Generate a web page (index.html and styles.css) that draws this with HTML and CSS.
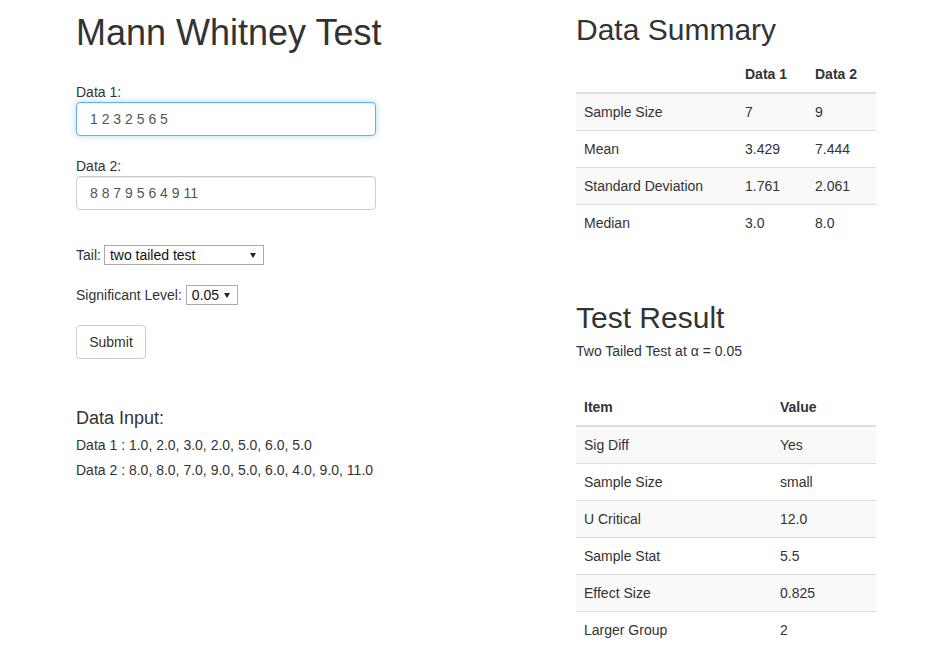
FILE: index.html
```html
<!DOCTYPE html>
<html lang="en">
<head>
<meta charset="utf-8">
<title>Mann Whitney Test</title>
<link rel="stylesheet" href="styles.css">
</head>
<body>
<div class="page">
  <div class="col-left">
    <h1 class="title">Mann Whitney Test</h1>
    <form class="form">
      <div class="form-group first">
        <label class="control-label" for="d1">Data 1:</label>
        <input id="d1" class="form-control focused" type="text" value="1 2 3 2 5 6 5">
      </div>
      <div class="form-group">
        <label class="control-label" for="d2">Data 2:</label>
        <input id="d2" class="form-control" type="text" value="8 8 7 9 5 6 4 9 11">
      </div>
      <div class="inline-row tail-row">
        <span>Tail:</span>
        <span class="sel sel-tail"><select><option>two tailed test</option></select></span>
      </div>
      <div class="inline-row sig-row">
        <span>Significant Level:</span>
        <span class="sel sel-sig"><select><option>0.05</option></select></span>
      </div>
      <button type="button" class="btn">Submit</button>
    </form>
    <h4 class="sub">Data Input:</h4>
    <p class="data-line">Data 1 : 1.0, 2.0, 3.0, 2.0, 5.0, 6.0, 5.0</p>
    <p class="data-line">Data 2 : 8.0, 8.0, 7.0, 9.0, 5.0, 6.0, 4.0, 9.0, 11.0</p>
  </div>
  <div class="col-right">
    <h2 class="h2">Data Summary</h2>
    <table class="table summary">
      <thead>
        <tr><th class="c1"></th><th class="c2">Data 1</th><th class="c3">Data 2</th></tr>
      </thead>
      <tbody>
        <tr><td>Sample Size</td><td>7</td><td>9</td></tr>
        <tr><td>Mean</td><td>3.429</td><td>7.444</td></tr>
        <tr><td>Standard Deviation</td><td>1.761</td><td>2.061</td></tr>
        <tr><td>Median</td><td>3.0</td><td>8.0</td></tr>
      </tbody>
    </table>
    <h2 class="h2 result-title">Test Result</h2>
    <p class="result-sub">Two Tailed Test at α = 0.05</p>
    <table class="table result">
      <thead>
        <tr><th class="r1">Item</th><th class="r2">Value</th></tr>
      </thead>
      <tbody>
        <tr><td>Sig Diff</td><td>Yes</td></tr>
        <tr><td>Sample Size</td><td>small</td></tr>
        <tr><td>U Critical</td><td>12.0</td></tr>
        <tr><td>Sample Stat</td><td>5.5</td></tr>
        <tr><td>Effect Size</td><td>0.825</td></tr>
        <tr><td>Larger Group</td><td>2</td></tr>
      </tbody>
    </table>
  </div>
</div>
</body>
</html>
```

FILE: styles.css
```css
* { box-sizing: border-box; }
html, body { margin: 0; padding: 0; background: #fff; }
body {
  font-family: "Liberation Sans", Arial, Helvetica, sans-serif;
  font-size: 14px;
  line-height: 20px;
  color: #333;
}
.page {
  display: flex;
  padding: 13px 0 0 76px;
}
.col-left { width: 500px; }
.col-right { width: 300px; }

.title {
  margin: 0;
  font-size: 36px;
  line-height: 40px;
  font-weight: normal;
  color: #333;
}
.form { margin: 29px 0 0; }
.form-group { width: 300px; margin-bottom: 20px; }
.control-label {
  display: block;
  font-weight: normal;
  line-height: 20px;
  height: 20px;
}
.form-control {
  display: block;
  width: 300px;
  height: 34px;
  padding: 6px 12px 6px 13px;
  font-family: inherit;
  font-size: 14px;
  line-height: 20px;
  color: #555;
  background: #fff;
  border: 1px solid #ccc;
  border-radius: 4px;
  box-shadow: inset 0 1px 1px rgba(0,0,0,.075);
  outline: none;
}
.form-control.focused {
  border-color: #66afe9;
  box-shadow: inset 0 1px 1px rgba(0,0,0,.075), 0 0 6px rgba(102,175,233,.5);
}
.inline-row {
  display: flex;
  align-items: center;
  height: 20px;
}
.tail-row { margin-top: 35px; }
.sig-row { margin-top: 20px; }
.sel {
  position: relative;
  display: inline-block;
  margin-left: 3px;
  height: 20px;
}
.sig-row .sel { margin-left: 4px; }
.sel select {
  -webkit-appearance: none;
  appearance: none;
  display: block;
  height: 20px;
  padding: 0 0 0 5px;
  margin: 0;
  font-family: inherit;
  font-size: 14px;
  line-height: 18px;
  color: #111;
  background: #fff;
  border: 1px solid #a9a9a9;
  border-radius: 0;
  outline: none;
}
.sel-tail select { width: 160px; }
.sel-sig select { width: 52px; }
.sel::after {
  content: "";
  position: absolute;
  right: 8px;
  top: 8px;
  width: 0;
  height: 0;
  border-left: 3px solid transparent;
  border-right: 3px solid transparent;
  border-top: 5px solid #222;
  pointer-events: none;
}
.btn {
  display: block;
  margin-top: 20px;
  width: 70px;
  height: 34px;
  padding: 6px 12px;
  font-family: inherit;
  font-size: 14px;
  line-height: 20px;
  color: #333;
  background: #fff;
  border: 1px solid #ccc;
  border-radius: 4px;
}
.sub {
  margin: 49px 0 0;
  font-size: 18px;
  line-height: 20px;
  font-weight: normal;
  color: #333;
}
.data-line { margin: 7px 0 0; line-height: 20px; }
.data-line + .data-line { margin-top: 5px; }

.h2 {
  margin: 0;
  font-size: 30px;
  line-height: 33px;
  font-weight: normal;
  color: #333;
}
.table {
  width: 300px;
  border-collapse: collapse;
  border-spacing: 0;
}
.table th, .table td {
  padding: 8px;
  line-height: 20px;
  text-align: left;
  vertical-align: top;
}
.table th {
  font-weight: bold;
  border-bottom: 2px solid #ddd;
}
.table td { border-top: 1px solid #ddd; }
.table tbody tr:nth-child(odd) td { background: #f9f9f9; }
.summary { margin-top: 10px; }
.summary .c1 { width: 161px; }
.summary .c2 { width: 70px; }
.summary .c3 { width: 69px; }
.result-title { margin-top: 60px; }
.result-sub { margin: 7px 0 0; }
.result { margin-top: 28px; }
.result .r1 { width: 196px; }
.result .r2 { width: 104px; }
```
